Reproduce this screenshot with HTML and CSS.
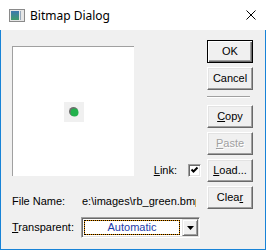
FILE: index.html
```html
<!DOCTYPE html>
<html>
<head>
<meta charset="utf-8">
<link rel="stylesheet" href="styles.css">
</head>
<body>
<div class="window">
  <div class="titlebar">
    <svg class="appicon" width="16" height="13" viewBox="0 0 16 13">
      <defs>
        <linearGradient id="g" x1="0" y1="0" x2="0" y2="1">
          <stop offset="0" stop-color="#3c78b0"/>
          <stop offset="1" stop-color="#3e9a6a"/>
        </linearGradient>
      </defs>
      <rect x="0.5" y="0.5" width="15" height="12" fill="#e6e6e6" stroke="#8a8a8a"/>
      <rect x="2" y="2" width="8" height="9" fill="url(#g)"/>
      <rect x="11" y="2" width="1" height="9" fill="#9ab"/>
    </svg>
    <span class="title">Bitmap Dialog</span>
    <svg class="close" width="10" height="10" viewBox="0 0 10 10">
      <path d="M0.5 0.5 L9.5 9.5 M9.5 0.5 L0.5 9.5" stroke="#000" stroke-width="1" fill="none"/>
    </svg>
  </div>
  <div class="client">
    <div class="main">
      <div class="top-row">
        <div class="picture">
          <svg class="bmp" width="20" height="20" viewBox="0 0 20 20">
            <rect width="20" height="20" fill="#f0f0f0"/>
            <circle cx="9.5" cy="9.5" r="4.5" fill="#6e6e6e"/>
            <circle cx="10.5" cy="10.5" r="4" fill="#22b14c"/>
          </svg>
        </div>
        <div class="link">
          <span><u>L</u>ink:</span>
          <span class="check">
            <svg width="9" height="9" viewBox="0 0 9 9">
              <path d="M1.5 3.5 L3.5 5.5 L7.5 1.5" stroke="#000" stroke-width="2" fill="none"/>
            </svg>
          </span>
        </div>
      </div>
      <div class="field file">
        <span class="label">File Name:</span>
        <span class="value">e:\images\rb_green.bmp</span>
      </div>
      <div class="field trans">
        <span class="label"><u>T</u>ransparent:</span>
        <div class="combo">
          <div class="combo-text">Automatic</div>
          <div class="drop">
            <svg width="7" height="4" viewBox="0 0 7 4"><path d="M0 0 H7 L3.5 4 Z" fill="#000"/></svg>
          </div>
        </div>
      </div>
    </div>
    <div class="buttons">
      <div class="btn default">OK</div>
      <div class="btn">Cancel</div>
      <div class="sep"></div>
      <div class="btn"><span><u>C</u>opy</span></div>
      <div class="btn disabled"><span><u>P</u>aste</span></div>
      <div class="btn"><span><u>L</u>oad...</span></div>
      <div class="btn"><span>Clea<u>r</u></span></div>
    </div>
  </div>
</div>
</body>
</html>
```

FILE: styles.css
```css
* { box-sizing: border-box; }
html, body { margin: 0; padding: 0; background: #fff; }
.window {
  width: 266px;
  height: 250px;
  display: flex;
  flex-direction: column;
}
.titlebar {
  height: 30px;
  flex: none;
  background: #fff;
  display: flex;
  align-items: center;
}
.appicon { margin-left: 9px; display: block; }
.title {
  margin-left: 5px;
  font-family: "Noto Sans", sans-serif;
  font-size: 12px;
  color: #000;
}
.close { margin-left: auto; margin-right: 10px; display: block; }
.client {
  flex: 1;
  background: #f0f0f0;
  border: 1px solid #1883d7;
  border-top: none;
  display: flex;
  padding: 10px 0 0 11px;
  font-family: "Liberation Sans", Arial, sans-serif;
  font-size: 11px;
  color: #000;
}
.main {
  width: 189px;
  display: flex;
  flex-direction: column;
}
.top-row {
  display: flex;
  align-items: flex-end;
  margin-top: 6px;
}
.picture {
  width: 122px;
  height: 130px;
  background: #fff;
  border-top: 1px solid #a0a0a0;
  border-left: 1px solid #a0a0a0;
  display: flex;
  align-items: center;
  justify-content: center;
}
.bmp { display: block; }
.link {
  margin-left: auto;
  margin-bottom: -1px;
  display: flex;
  align-items: center;
  gap: 11px;
  line-height: 13px;
}
.check {
  width: 13px;
  height: 13px;
  background: #fff;
  border: 1px solid;
  border-color: #a0a0a0 #fff #fff #a0a0a0;
  box-shadow: inset 1px 1px #696969, inset -1px -1px #e3e3e3;
  display: flex;
  align-items: center;
  justify-content: center;
}
.check svg { display: block; }
.field {
  display: flex;
  align-items: center;
  line-height: 13px;
}
.file { margin-top: 19px; }
.trans { margin-top: 9px; }
.label { width: 69px; flex: none; }
.value {
  width: 115px;
  padding-left: 1px;
  overflow: hidden;
  white-space: nowrap;
}
.combo {
  width: 119px;
  height: 21px;
  background: #fff;
  border: 1px solid;
  border-color: #a0a0a0 #fff #fff #a0a0a0;
  box-shadow: inset 1px 1px #696969, inset -1px -1px #e3e3e3;
  padding: 1px 1px 1px 1px;
  display: flex;
}
.combo-text {
  flex: 1;
  margin: 1px 2px 1px 1px;
  border: 1px dotted #000;
  background: linear-gradient(#fff, #fff) padding-box, #e08a00 border-box;
  color: #1c3aa8;
  text-align: center;
  line-height: 13px;
}
.drop {
  width: 16px;
  height: 17px;
  background: #f0f0f0;
  border: 1px solid;
  border-color: #e3e3e3 #696969 #696969 #e3e3e3;
  box-shadow: inset 1px 1px #fff, inset -1px -1px #a0a0a0;
  display: flex;
  align-items: center;
  justify-content: center;
}
.drop svg { display: block; }
.buttons {
  margin-left: 6px;
  width: 46px;
  display: flex;
  flex-direction: column;
}
.btn {
  width: 46px;
  height: 23px;
  margin-bottom: 4px;
  background: #f0f0f0;
  border: 1px solid;
  border-color: #fff #696969 #696969 #fff;
  box-shadow: inset -1px -1px #a0a0a0, inset 1px 1px #e3e3e3;
  display: flex;
  align-items: center;
  justify-content: center;
  line-height: 13px;
}
.btn.default {
  border: 1px solid #000;
  box-shadow: inset 1px 1px #fff, inset -1px -1px #696969, inset -2px -2px #a0a0a0;
}
.btn.disabled {
  color: #a0a0a0;
  text-shadow: 1px 1px #fff;
}
.sep {
  width: 43px;
  height: 2px;
  margin: 2px 0 7px 0;
  border-top: 1px solid #a0a0a0;
  border-bottom: 1px solid #fff;
}
```
